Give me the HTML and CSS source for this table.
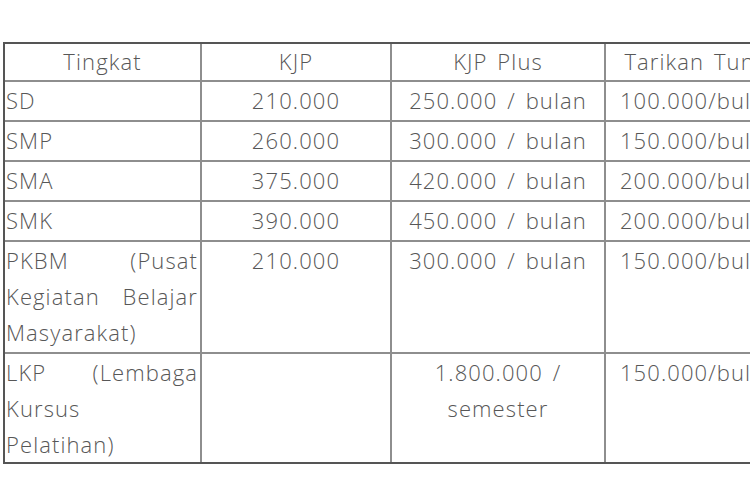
FILE: index.html
```html
<!DOCTYPE html>
<html lang="id">
<head>
<meta charset="utf-8">
<title>KJP</title>
<link rel="stylesheet" href="styles.css">
</head>
<body>
<div class="wrap">
<table class="kjp">
  <colgroup>
    <col class="c1"><col class="c2"><col class="c3"><col class="c4">
  </colgroup>
  <thead>
    <tr><th>Tingkat</th><th>KJP</th><th>KJP Plus</th><th>Tarikan Tunai</th></tr>
  </thead>
  <tbody>
    <tr><td class="lvl">SD</td><td>210.000</td><td>250.000 / bulan</td><td>100.000/bulan</td></tr>
    <tr><td class="lvl">SMP</td><td>260.000</td><td>300.000 / bulan</td><td>150.000/bulan</td></tr>
    <tr><td class="lvl">SMA</td><td>375.000</td><td>420.000 / bulan</td><td>200.000/bulan</td></tr>
    <tr><td class="lvl">SMK</td><td>390.000</td><td>450.000 / bulan</td><td>200.000/bulan</td></tr>
    <tr><td class="lvl">PKBM (Pusat Kegiatan Belajar Masyarakat)</td><td>210.000</td><td>300.000 / bulan</td><td>150.000/bulan</td></tr>
    <tr class="last"><td class="lvl">LKP (Lembaga Kursus<br>Pelatihan)</td><td></td><td>1.800.000 / semester</td><td>150.000/bulan</td></tr>
  </tbody>
</table>
</div>
</body>
</html>
```
FILE: styles.css
```css
html, body {
  margin: 0;
  padding: 0;
  background: #ffffff;
  overflow: hidden;
}
.wrap {
  padding: 42px 0 0 3px;
  width: 900px;
}
.kjp {
  border-collapse: separate;
  border-spacing: 0;
  table-layout: fixed;
  width: 795px;
  border-top: 2px solid #555;
  border-left: 2px solid #555;
  border-bottom: 2px solid #555;
  font-family: "Open Sans", "Lato", sans-serif;
  font-weight: 300;
  font-size: 22px;
  letter-spacing: 1.1px;
  word-spacing: 3px;
  color: #575757;
}
.c1 { width: 197px; }
.c2 { width: 190px; }
.c3 { width: 214px; }
.c4 { width: 192px; }
.kjp th, .kjp td {
  box-sizing: border-box;
  border-right: 2px solid #8e8e8e;
  border-bottom: 2px solid #8e8e8e;
  line-height: 36px;
  padding: 0 6px 2px;
  text-align: center;
  vertical-align: top;
  font-weight: 300;
  overflow: hidden;
  white-space: normal;
}
.kjp th {
  padding-top: 0;
  line-height: 34px;
  padding-bottom: 2px;
}
.kjp .lvl {
  text-align: justify;
  padding-left: 1px;
  padding-right: 2px;
}
.kjp tr.last td {
  border-bottom: none;
  padding-bottom: 0;
}
.kjp td:nth-child(4), .kjp th:nth-child(4) {
  white-space: nowrap;
  text-overflow: clip;
  padding-left: 2px;
}
```
